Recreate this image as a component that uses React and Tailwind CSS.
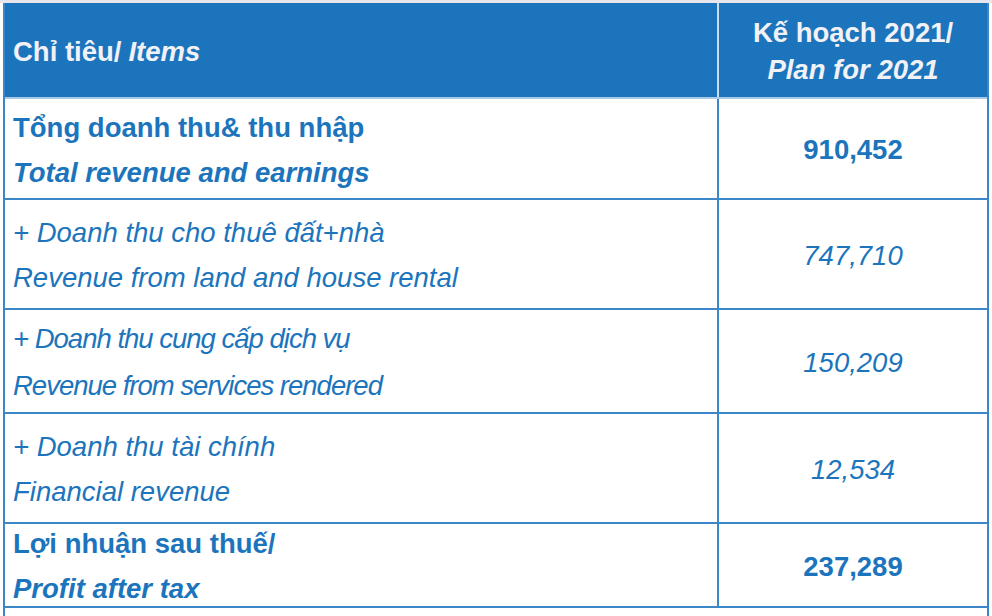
import React from 'react';

const rows = [
  {
    vi: 'Tổng doanh thu& thu nhập',
    en: 'Total revenue and earnings',
    value: '910,452',
    bold: true,
    height: 'h-[101px]',
  },
  {
    vi: '+ Doanh thu cho thuê đất+nhà',
    en: 'Revenue from land and house rental',
    value: '747,710',
    height: 'h-[110px]',
  },
  {
    vi: '+ Doanh thu cung cấp dịch vụ',
    en: 'Revenue from services rendered',
    value: '150,209',
    tight: true,
    height: 'h-[104px]',
  },
  {
    vi: '+ Doanh thu tài chính',
    en: 'Financial revenue',
    value: '12,534',
    height: 'h-[110px]',
  },
  {
    vi: 'Lợi nhuận sau thuế/',
    en: 'Profit after tax',
    value: '237,289',
    bold: true,
    height: 'h-[84px]',
  },
];

const PlanTable = () => {
  return (
    <div className="ml-[3px] w-[986px] border-x-2 border-[#3b87c8]">
      <div className="flex h-[96px] bg-[#1c75bc] text-[#f1f1f6] font-bold border-b-2 border-[#a9c9e6]">
        <div className="w-[714px] flex items-center pl-2 pt-[3px] border-r-2 border-[#c9dcef]">
          Chỉ tiêu/ <i className="ml-[7px]">Items</i>
        </div>
        <div className="flex-1 flex flex-col justify-center items-center leading-[37px] pt-[2px]">
          <span>Kế hoạch 2021/</span>
          <i>Plan for 2021</i>
        </div>
      </div>
      {rows.map(row => (
        <div key={row.value} className={`flex ${row.height} border-b-2 border-[#3b87c8]`}>
          <div
            className={`w-[714px] flex flex-col justify-center pl-2 pt-[2px] border-r-2 border-[#3b87c8] ${row.tight ? 'leading-[47px] tracking-[-1px]' : 'leading-[45px]'} ${row.bold ? 'font-bold' : 'italic'}`}
          >
            <span>{row.vi}</span>
            <i>{row.en}</i>
          </div>
          <div className={`flex-1 flex items-center justify-center pt-[3px] ${row.bold ? 'font-bold' : 'italic'}`}>
            {row.value}
          </div>
        </div>
      ))}
      <div className="h-[20px]" />
    </div>
  );
}

export default function App() {
  return (
    <div className="w-[992px] h-[616px] overflow-hidden bg-white text-[#1c75bc] text-[27.5px] font-['Liberation_Sans',Arial,sans-serif]">
      <div className="h-[3px] bg-[#e6e6ec]" />
      <PlanTable />
    </div>
  );
}
